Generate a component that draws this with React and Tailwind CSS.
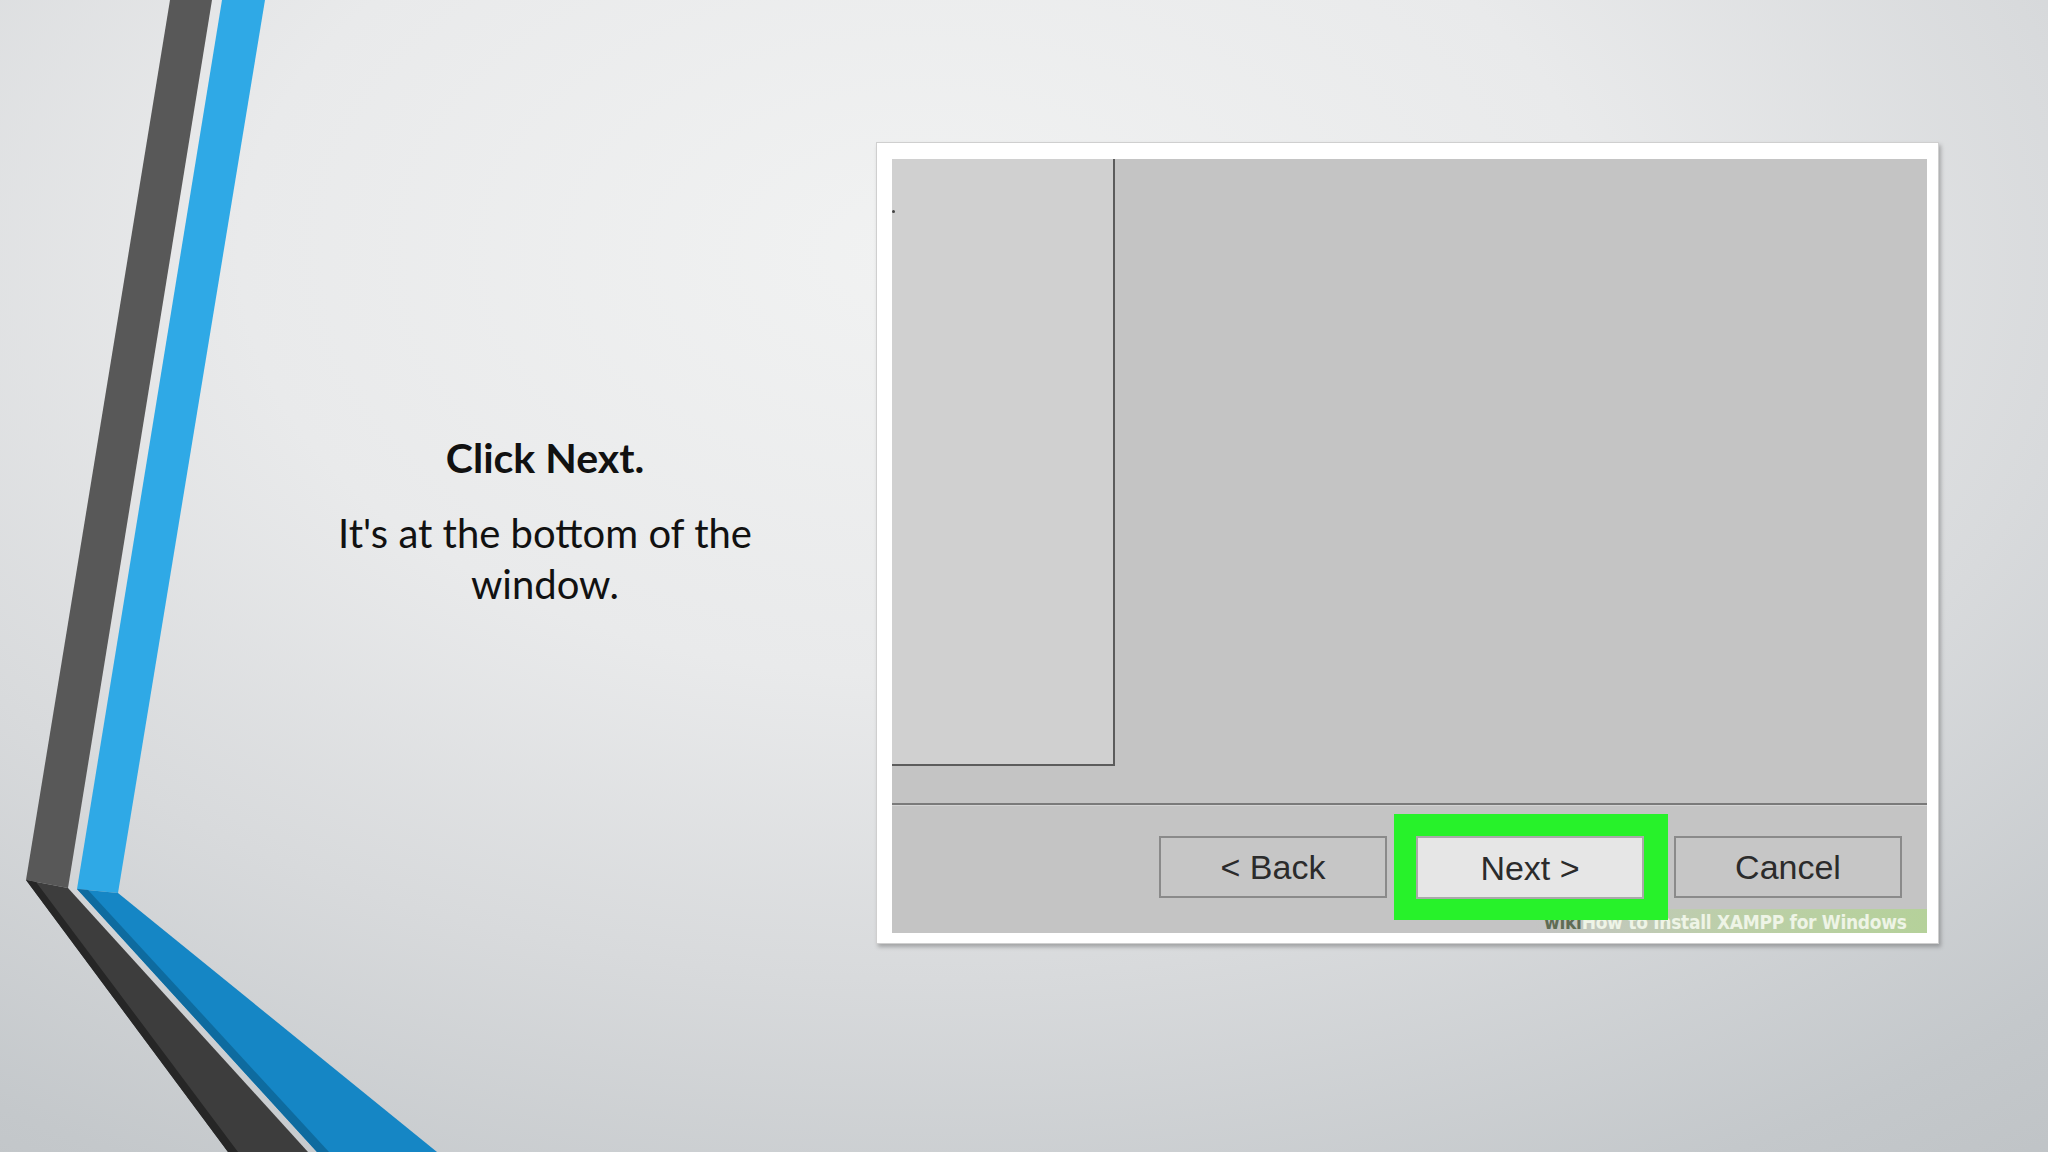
import React from 'react';

function Stripes() {
  return (
    <svg
      className="absolute left-0 top-0"
      width="480"
      height="1152"
      viewBox="0 0 480 1152"
    >
      {/* dark band */}
      <polygon points="170,0 212,0 68,888 26,880" fill="#585858" />
      <polygon points="26,880 68,888 308,1152 228,1152" fill="#3d3d3d" />
      <polygon points="26,880 36,882 238,1152 228,1152" fill="#262626" />
      {/* blue band */}
      <polygon points="222,0 265,0 118,893 77,889" fill="#2fa9e6" />
      <polygon points="77,889 118,893 437,1152 317,1152" fill="#1586c5" />
      <polygon points="77,889 88,890 329,1152 317,1152" fill="#0e6b9f" />
    </svg>
  );
}

function WinButton({ children, active }) {
  return (
    <div
      className={
        active
          ? 'w-[228px] h-[63px] flex items-center justify-center bg-[#e6e6e6] border-2 border-[#a9a9a9]'
          : 'w-[228px] h-[62px] flex items-center justify-center bg-[#c6c6c6] border-2 border-[#8a8a8a]'
      }
    >
      <span className="text-[34px] text-[#2b2b2b] font-['Liberation_Sans',Arial,sans-serif] leading-none">
        {children}
      </span>
    </div>
  );
}

export default function App() {
  return (
    <div className="relative w-[2048px] h-[1152px] overflow-hidden bg-[radial-gradient(ellipse_95%_105%_at_45%_22%,#f1f2f2_0%,#e9eaeb_35%,#d8dadc_60%,#c4c8cb_85%,#bdc1c4_100%)]">
      <Stripes />

      <div className="relative flex h-full">
        {/* Texte de la diapositive */}
        <div className="w-[876px] pl-[214px] pt-[431px] flex flex-col items-center text-[#111] font-['Lato','Open_Sans',sans-serif]">
          <h2 className="text-[41px] font-bold leading-[54px]">Click Next.</h2>
          <p className="mt-[23px] w-[460px] text-center text-[40px] leading-[51px]">
            It's at the bottom of the window.
          </p>
        </div>

        {/* Capture de l'installateur */}
        <div className="mt-[142px] w-[1063px] h-[802px] bg-white pl-[15px] pt-[16px] pr-[11px] pb-[10px] border border-[#cfcfcf] shadow-[2px_3px_4px_rgba(0,0,0,0.25)]">
          <div className="relative w-full h-full bg-[#c4c4c4] flex flex-col overflow-hidden">
            <div className="h-[644px] flex">
              <div className="relative w-[223px] h-[607px] bg-[#d0d0d0] border-r-2 border-b-2 border-[#5c5c5c]">
                <div className="absolute left-0 top-[51px] w-[3px] h-[3px] rounded-full bg-[#444]" />
              </div>
            </div>
            <div className="h-[2px] bg-[#7a7a7a]" />
            <div className="h-px bg-[#d4d4d4]" />

            <div className="relative flex-1 flex items-start pt-[8px] pl-[267px]">
              <div className="mt-[22px]">
                <WinButton>&lt; Back</WinButton>
              </div>
              <div className="relative z-10 ml-[7px] w-[274px] h-[106px] bg-[#27f22a] pl-[22px] pt-[22px]">
                <WinButton active>Next &gt;</WinButton>
              </div>
              <div className="ml-[6px] mt-[22px]">
                <WinButton>Cancel</WinButton>
              </div>

              <div className="absolute right-0 bottom-0 w-[393px] h-[24px] flex items-end pl-[10px] whitespace-nowrap overflow-hidden bg-gradient-to-r from-[#c4c4c4] via-[#bccfa8] to-[#b5d19a] font-['DejaVu_Sans_Condensed','Liberation_Sans',sans-serif] text-[19px] leading-[22px] tracking-[-0.3px]">
                <span className="font-bold text-[#5f6c54]">wiki</span>
                <span className="text-[#eef4e6] font-bold">How to Install XAMPP for Windows</span>
              </div>
            </div>
          </div>
        </div>
      </div>
    </div>
  );
}
